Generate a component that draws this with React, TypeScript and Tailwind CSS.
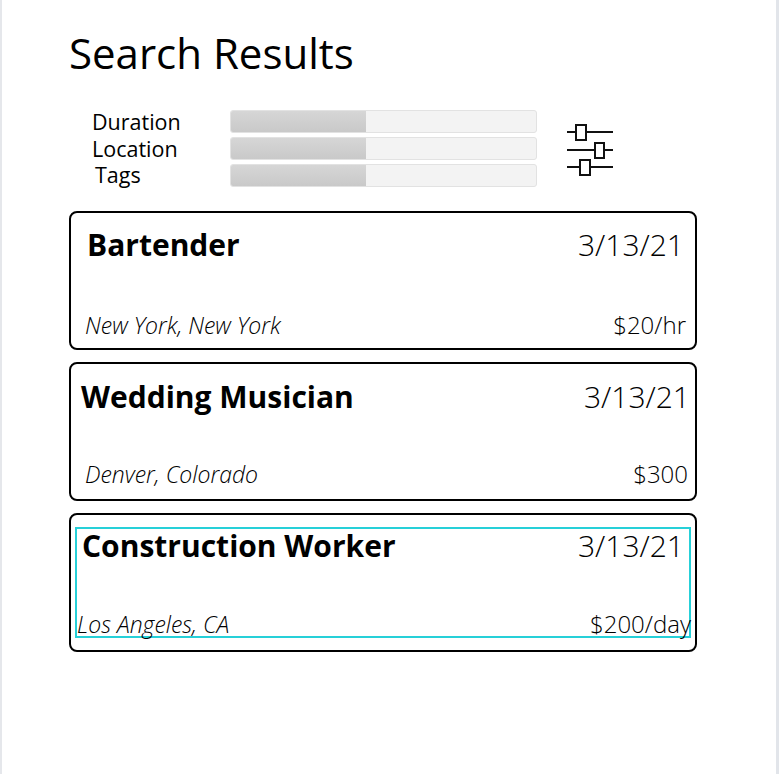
import React from "react";

type Job = {
  title: string;
  date: string;
  place: string;
  pay: string;
  selected?: boolean;
  // hand-tuned offsets, the mockup isn't perfectly aligned
  pad: { top: string; title: string; date: string; place: string; pay: string };
};

const jobs: Job[] = [
  {
    title: "Bartender",
    date: "3/13/21",
    place: "New York, New York",
    pay: "$20/hr",
    pad: { top: "pt-[17px] pb-[11px]", title: "pl-[16px]", date: "pr-[11px]", place: "pl-[14px]", pay: "pr-[9px]" },
  },
  {
    title: "Wedding Musician",
    date: "3/13/21",
    place: "Denver, Colorado",
    pay: "$300",
    pad: { top: "pt-[18px] pb-[13px]", title: "pl-[10px]", date: "pr-[5px]", place: "pl-[14px]", pay: "pr-[7px]" },
  },
  {
    title: "Construction Worker",
    date: "3/13/21",
    place: "Los Angeles, CA",
    pay: "$200/day",
    selected: true,
    pad: { top: "pt-[2px] pb-0", title: "pl-[5px]", date: "pr-[5px]", place: "pl-0", pay: "-mr-[2px]" },
  },
];

const filters = ["Duration", "Location", "Tags"];

function SlidersIcon() {
  return (
    <svg width="48" height="52" viewBox="0 0 48 52" fill="none" stroke="#111" strokeWidth="2">
      <line x1="0" y1="8" x2="46" y2="8" />
      <rect x="9" y="1" width="10" height="15" fill="#fff" />
      <line x1="0" y1="26" x2="46" y2="26" />
      <rect x="28" y="19" width="9" height="15" fill="#fff" />
      <line x1="0" y1="43" x2="46" y2="43" />
      <rect x="13" y="36" width="10" height="15" fill="#fff" />
    </svg>
  );
}

function CardBody({ job }: { job: Job }) {
  return (
    <div className={"h-full flex flex-col justify-between " + job.pad.top}>
      <div className="flex justify-between items-baseline">
        <span className={"text-[30px] font-bold leading-[30px] text-black " + job.pad.title}>{job.title}</span>
        <span className={"text-[30px] font-light leading-[30px] text-black " + job.pad.date}>{job.date}</span>
      </div>
      <div className="flex justify-between items-baseline">
        <span className={"text-[23px] font-light italic leading-[23px] text-black " + job.pad.place}>{job.place}</span>
        <span className={"text-[24px] font-light leading-[23px] text-black " + job.pad.pay}>{job.pay}</span>
      </div>
    </div>
  );
}

function JobCard({ job }: { job: Job }) {
  return (
    <div className="rounded-[8px] border-2 border-black h-[139px]">
      {job.selected ? (
        <div className="h-full px-[4px] py-[12px]">
          <div className="h-full border-2 border-[#26d0d8]">
            <CardBody job={job} />
          </div>
        </div>
      ) : (
        <CardBody job={job} />
      )}
    </div>
  );
}

export default function App() {
  return (
    <div
      className="w-[779px] h-[774px] bg-white border-l-2 border-l-[#e5e7eb] border-r-[3px] border-r-[#e2e5ea] overflow-hidden"
      style={{ fontFamily: '"Open Sans", "Liberation Sans", sans-serif' }}
    >
      <div className="pl-[67px] pr-[79px] pt-[25px]">
        <h1 className="text-[42px] font-normal leading-[56px] text-black">Search Results</h1>

        <div className="flex items-center mt-[28px] mb-[22px]">
          <div className="flex flex-col w-[161px] pl-[23px] text-[21.5px] leading-[26.5px] text-black">
            {filters.map((f) => (
              <span key={f} className={f === "Tags" ? "pl-[3px]" : ""}>
                {f}
              </span>
            ))}
          </div>
          <div className="flex flex-col gap-[4px] w-[307px]">
            {filters.map((f) => (
              <div key={f} className="h-[23px] rounded-[3px] border border-[#e2e2e2] bg-[#f3f3f3] overflow-hidden">
                <div className="h-full w-[135px] bg-gradient-to-b from-[#d6d6d6] to-[#c9c9c9]" />
              </div>
            ))}
          </div>
          <div className="ml-[30px] mt-[2px]">
            <SlidersIcon />
          </div>
        </div>

        <div className="flex flex-col gap-[12px]">
          {jobs.map((j) => (
            <JobCard key={j.title} job={j} />
          ))}
        </div>
      </div>
    </div>
  );
}
